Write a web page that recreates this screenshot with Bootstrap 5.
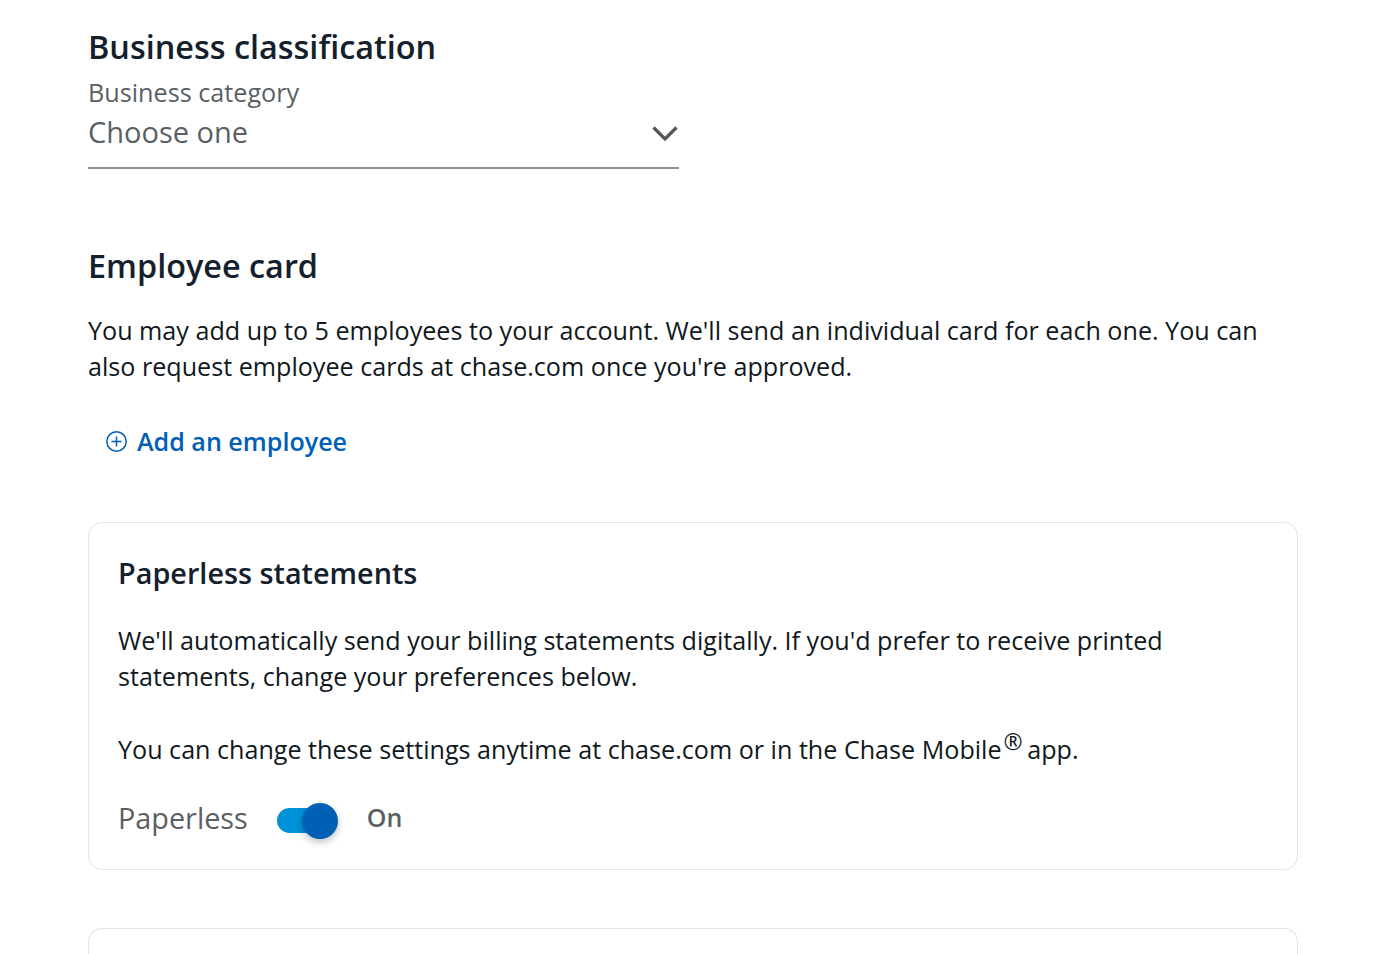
<!DOCTYPE html>
<html lang="en"><head><meta charset="utf-8"><title>Business application</title>
<link rel="stylesheet" href="https://cdn.jsdelivr.net/npm/bootstrap@5.3.0/dist/css/bootstrap.min.css">
<style>
html,body{height:954px;overflow:hidden}
body{font-family:"Open Sans",sans-serif;color:#101820;background:#fff}
.page-wrap{padding:24px 96px 0 88px}
.sec-title{font-size:32.4px;line-height:44px;font-weight:600;color:#14202b;margin:0}
.field-label{font-size:25.2px;line-height:34px;color:#5a5f64;margin-top:7px}
.select-box{width:591px;height:60px;border-bottom:2px solid #8f9396;color:#5a5f64;font-size:29px;line-height:40px;padding-bottom:12px}
.emp-title{margin-top:74px}
.body-text{font-size:25.13px;line-height:36px;color:#101820;margin:0}
.emp-text{margin-top:25px}
.add-link{font-size:25.1px;line-height:36px;font-weight:600;color:#0060b6;text-decoration:none;margin:39px 0 0 18px;gap:10px}
.panel-box{border:1px solid #e3e4e6;border-radius:14px;padding:28px 29px;height:348px;margin-top:63px}
.panel-title{font-size:28.8px;line-height:44px;font-weight:600;color:#14202b;margin:0 0 27px}
.panel-gap{margin-top:37px}
.panel-gap sup{font-size:23px;top:-.38em;line-height:0;margin:0 -2px 0 2px}
.toggle-row{margin-top:31px}
.toggle-label{font-size:28.8px;line-height:40px;color:#5a5f64}
.toggle-track{width:61px;height:36px;margin-left:29px;margin-top:5px}
.toggle-bg{left:0;top:5px;width:58px;height:25px;border-radius:13px;background:#0092d8}
.toggle-knob{left:25px;top:0;width:36px;height:36px;border-radius:50%;background:#0060b6;box-shadow:0 3px 7px rgba(0,0,0,.25)}
.toggle-state{font-size:25px;line-height:36px;font-weight:600;color:#5a5f64;margin:1px 0 0 29px}
.panel-next{height:60px;margin-top:58px;border-bottom:0;border-radius:14px 14px 0 0}
</style></head><body>
<main class="page-wrap">
<h2 class="sec-title">Business classification</h2>
<div class="field-label">Business category</div>
<div class="select-box d-flex justify-content-between align-items-center">
<span>Choose one</span>
<svg class="mt-1" width="28" height="18" viewBox="0 0 28 18" fill="none" stroke="#53575b" stroke-width="3.2" aria-hidden="true"><path d="M2.5 2.5 14 14 25.500 2.500"/></svg>
</div>
<h2 class="sec-title emp-title">Employee card</h2>
<p class="body-text emp-text">You may add up to 5 employees to your account. We'll send an individual card for each one. You can also request employee cards at chase.com once you're approved.</p>
<a href="#" class="add-link d-inline-flex align-items-center">
<svg width="21" height="21" viewBox="0 0 21 21" fill="none" stroke="#0060b6" stroke-width="1.500" aria-hidden="true"><circle cx="10.500" cy="10.500" r="9.700"/><path d="M10.500 5.500v10M5.500 10.500h10"/></svg>
<span>Add an employee</span></a>
<section class="panel-box">
<h3 class="panel-title">Paperless statements</h3>
<p class="body-text">We'll automatically send your billing statements digitally. If you'd prefer to receive printed statements, change your preferences below.</p>
<p class="body-text panel-gap">You can change these settings anytime at chase.com or in the Chase Mobile<sup>®</sup> app.</p>
<div class="toggle-row d-flex align-items-start">
<span class="toggle-label">Paperless</span>
<span class="toggle-track position-relative d-block"><span class="toggle-bg position-absolute"></span><span class="toggle-knob position-absolute"></span></span>
<span class="toggle-state">On</span>
</div>
</section>
<section class="panel-box panel-next"></section>
</main>
<script src="https://cdn.jsdelivr.net/npm/bootstrap@5.3.0/dist/js/bootstrap.bundle.min.js"></script>
</body></html>
